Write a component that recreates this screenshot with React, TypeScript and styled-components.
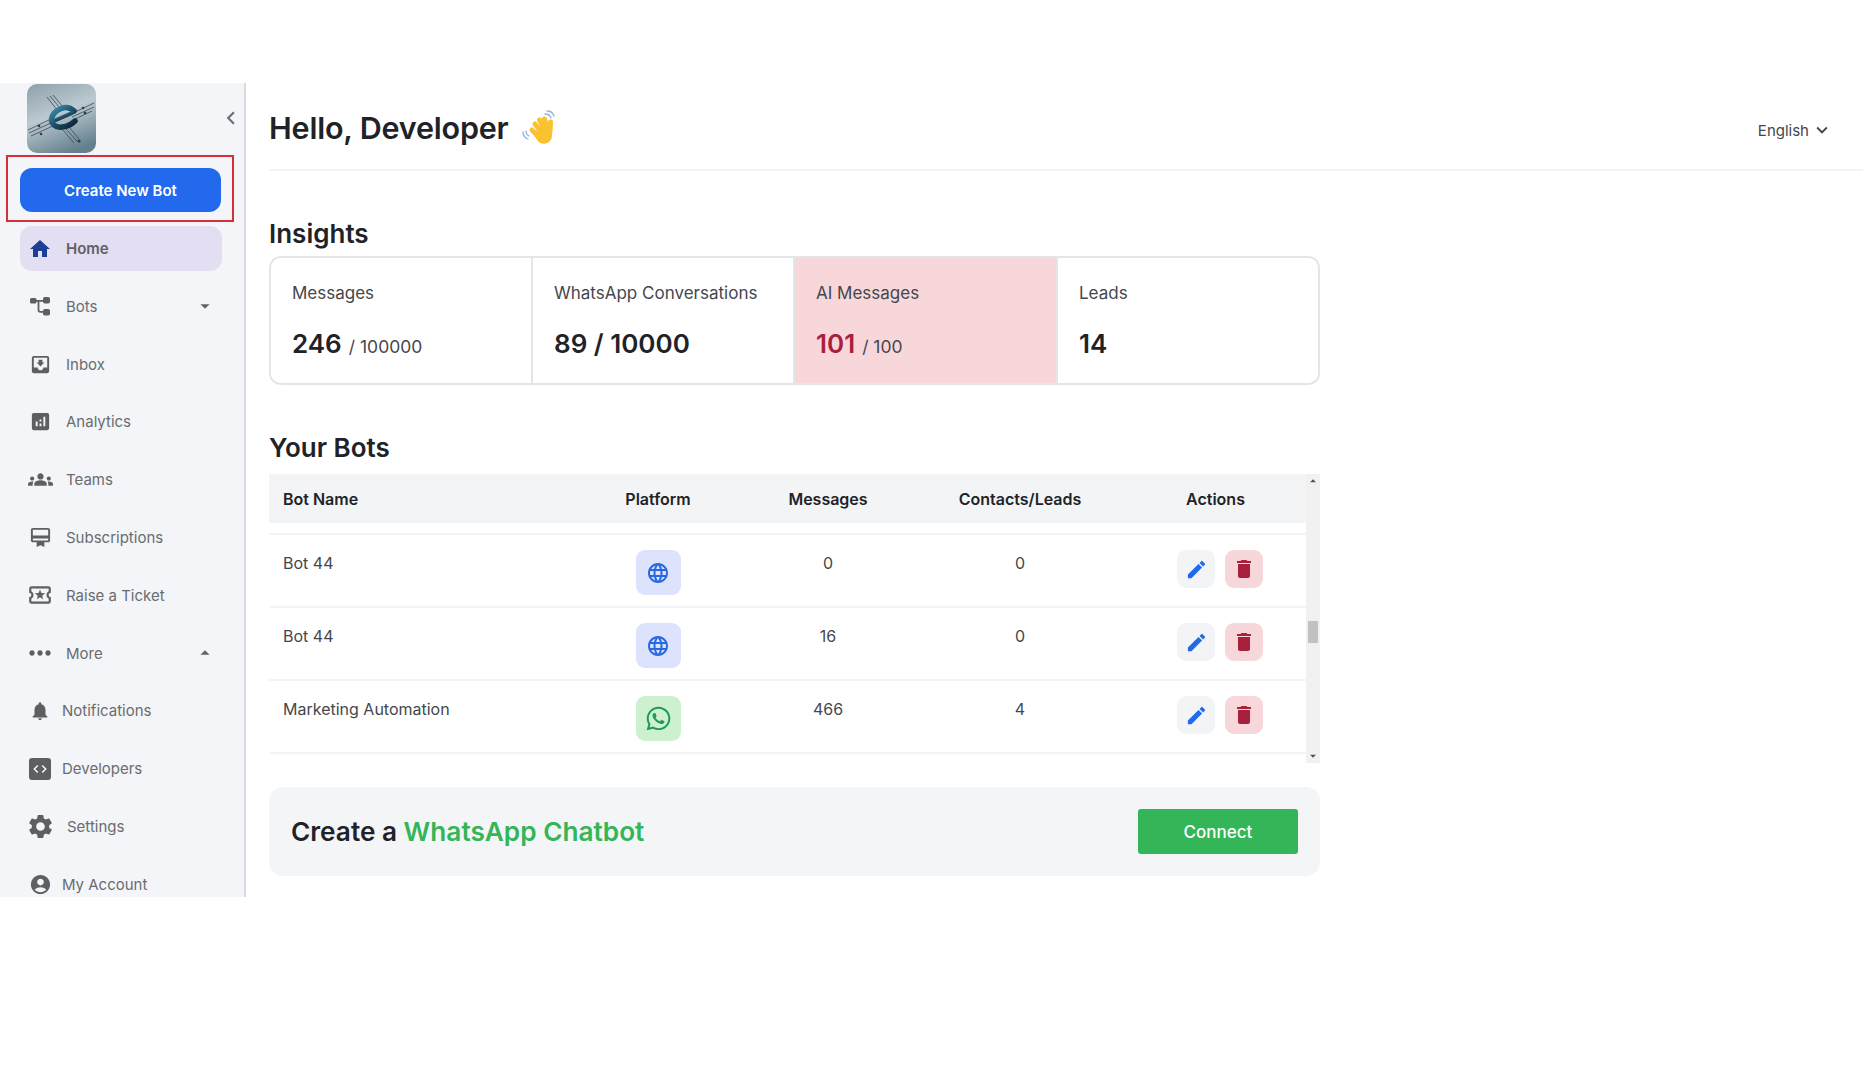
import React from "react";
import styled, { createGlobalStyle } from "styled-components";
import {
  MdHome,
  MdMoveToInbox,
  MdAnalytics,
  MdGroups,
  MdCardMembership,
  MdOutlineLocalActivity,
  MdMoreHoriz,
  MdNotifications,
  MdSettings,
  MdAccountCircle,
  MdCode,
  MdEdit,
  MdDelete,
  MdLanguage,
  MdChevronLeft,
  MdKeyboardArrowDown,
  MdArrowDropDown,
  MdArrowDropUp,
} from "react-icons/md";
import { FaWhatsapp } from "react-icons/fa";

const GlobalStyle = createGlobalStyle`
  html, body {
    margin: 0;
    padding: 0;
    background: #fff;
    font-family: "Inter", "Liberation Sans", sans-serif;
    color: #1f2328;
  }
  * { box-sizing: border-box; }
`;

const Page = styled.div`
  padding-top: 83px;
  height: 1080px;
  overflow: hidden;
`;

const Shell = styled.div`
  display: flex;
  height: 814px;
`;

const Sidebar = styled.aside`
  width: 246px;
  flex-shrink: 0;
  background: #f3f5f8;
  border-right: 2px solid #d8dbe0;
  overflow: hidden;
`;

const LogoRow = styled.div`
  display: flex;
  align-items: center;
  justify-content: space-between;
  height: 70px;
  padding: 0 0 0 27px;
  color: #6b6f75;
`;

const CreateFrame = styled.div`
  width: 228px;
  height: 67px;
  margin: 2px 0 0 6px;
  padding: 11px 12px;
  border: 2px solid #d5303a;
`;

const CreateButton = styled.button`
  display: block;
  width: 201px;
  height: 44px;
  border: none;
  border-radius: 12px;
  background: #2369ee;
  color: #fff;
  font: 600 15px "Inter", sans-serif;
`;

const NavList = styled.nav`
  display: flex;
  flex-direction: column;
  gap: 12.8px;
  margin: 4px 0 0 20px;
  width: 202px;
`;

const NavRow = styled.div<{ $active?: boolean }>`
  display: flex;
  align-items: center;
  flex-shrink: 0;
  height: 45px;
  padding: 0 6px 0 9px;
  border-radius: 12px;
  background: ${(p) => (p.$active ? "#e4def3" : "transparent")};
  color: ${(p) => (p.$active ? "#5f6068" : "#6a6c70")};
  font-size: 15px;
  font-weight: ${(p) => (p.$active ? 600 : 400)};
`;

const NavIcon = styled.span<{ $active?: boolean }>`
  display: flex;
  align-items: center;
  justify-content: center;
  flex-shrink: 0;
  width: 22px;
  color: ${(p) => (p.$active ? "#1c3f94" : "#5d5f63")};
  svg {
    flex-shrink: 0;
  }
`;

const NavLabel = styled.span<{ $indent: number }>`
  flex: 1;
  margin-left: ${(p) => p.$indent}px;
`;

const Caret = styled.span`
  display: flex;
  color: #63656a;
`;

const DevBox = styled.span`
  display: flex;
  align-items: center;
  justify-content: center;
  width: 22px;
  height: 22px;
  border-radius: 3px;
  background: #5d5f63;
  color: #fff;
`;

const Main = styled.main`
  flex: 1;
  min-width: 0;
  padding: 0 3px 0 23px;
`;

const Header = styled.header`
  display: flex;
  align-items: center;
  justify-content: space-between;
  height: 88px;
  padding: 3px 30px 0 0;
  border-bottom: 2px solid #f3f4f6;
`;

const Title = styled.h1`
  display: flex;
  align-items: center;
  gap: 12px;
  margin: 0;
  font-size: 30.5px;
  font-weight: 600;
  letter-spacing: -0.2px;
`;

const Language = styled.div`
  display: flex;
  align-items: center;
  gap: 2px;
  padding-top: 5px;
  color: #44474c;
  font-size: 15px;
`;

const Content = styled.div`
  width: 1051px;
`;

const SectionTitle = styled.h2`
  margin: 47px 0 6px;
  font-size: 26px;
  line-height: 32px;
  font-weight: 600;
`;

const Cards = styled.section`
  display: grid;
  grid-template-columns: 260px 262px 263px 1fr;
  height: 129px;
  border: 2px solid #e3e5e8;
  border-radius: 12px;
  overflow: hidden;
`;

const Card = styled.div<{ $alert?: boolean }>`
  padding: 24px 0 0 21px;
  background: ${(p) => (p.$alert ? "#f8d7da" : "#fff")};
  & + & {
    border-left: 2px solid #e3e5e8;
  }
`;

const CardLabel = styled.div`
  color: #44474c;
  font-size: 17px;
  line-height: 22px;
`;

const CardValue = styled.div<{ $alert?: boolean }>`
  margin-top: 23px;
  color: ${(p) => (p.$alert ? "#a8213c" : "#1f2328")};
  font-size: 26px;
  line-height: 34px;
  font-weight: 600;
`;

const CardLimit = styled.span`
  margin-left: 7px;
  color: #44474c;
  font-size: 17.5px;
  font-weight: 400;
`;

const TableWrap = styled.section`
  display: flex;
  height: 289px;
  margin-top: 10px;
`;

const TableInner = styled.div`
  flex: 1;
  min-width: 0;
`;

const columns = "300px 178px 162px 222px 169px";

const TableHead = styled.div`
  display: grid;
  grid-template-columns: ${columns};
  align-items: center;
  height: 49px;
  background: #f2f4f6;
  font-size: 16px;
  font-weight: 600;
`;

const HeadName = styled.div`
  padding-left: 14px;
`;

const HeadCell = styled.div`
  text-align: center;
`;

const TableGap = styled.div`
  height: 12px;
  border-bottom: 2px solid #f3f4f6;
`;

const TableRow = styled.div`
  display: grid;
  grid-template-columns: ${columns};
  height: 73px;
  border-bottom: 2px solid #f3f4f6;
  color: #44474c;
  font-size: 16px;
`;

const NameCell = styled.div`
  padding: 17px 0 0 14px;
  line-height: 22px;
`;

const NumCell = styled.div`
  padding-top: 17px;
  line-height: 22px;
  text-align: center;
`;

const PlatformCell = styled.div`
  display: flex;
  justify-content: center;
  padding-top: 15px;
`;

const PlatformBadge = styled.span<{ $kind: "web" | "whatsapp" }>`
  display: flex;
  align-items: center;
  justify-content: center;
  width: 45px;
  height: 45px;
  border-radius: 9px;
  background: ${(p) => (p.$kind === "web" ? "#dde3fc" : "#cdf0cf")};
  color: ${(p) => (p.$kind === "web" ? "#2968e0" : "#1f9a55")};
`;

const ActionsCell = styled.div`
  display: flex;
  justify-content: center;
  gap: 10px;
  padding: 15px 0 0 9px;
`;

const ActionButton = styled.span<{ $danger?: boolean }>`
  display: flex;
  align-items: center;
  justify-content: center;
  width: 38px;
  height: 38px;
  border-radius: 9px;
  background: ${(p) => (p.$danger ? "#f8d7da" : "#f2f4f6")};
  color: ${(p) => (p.$danger ? "#a8213c" : "#2369ee")};
`;

const Scrollbar = styled.div`
  display: flex;
  flex-direction: column;
  align-items: center;
  justify-content: space-between;
  width: 14px;
  background: #f1f1f1;
  color: #505050;
`;

const ScrollThumb = styled.div`
  width: 10px;
  height: 22px;
  margin-top: 133px;
  margin-bottom: auto;
  background: #c1c1c1;
`;

const Banner = styled.section`
  display: flex;
  align-items: center;
  justify-content: space-between;
  height: 89px;
  margin-top: 24px;
  padding: 0 22px;
  border-radius: 14px;
  background: #f3f5f7;
`;

const BannerText = styled.div`
  font-size: 26.2px;
  font-weight: 600;
`;

const Accent = styled.span`
  color: #34b558;
`;

const ConnectButton = styled.button`
  width: 160px;
  height: 45px;
  border: none;
  border-radius: 3px;
  background: #34b558;
  color: #fff;
  font: 500 17px "Inter", sans-serif;
`;

const BotsIcon = () => (
  <svg width="22" height="22" viewBox="0 0 22 22" fill="#5d5f63">
    <rect x="1" y="3" width="6.5" height="5.5" rx="1.6" />
    <rect x="14" y="2" width="7" height="6.5" rx="1.8" />
    <rect x="14" y="14" width="7" height="6.5" rx="1.8" />
    <path d="M7 5h8v1.8h-4.6v8.2c0 .6.3.9.9.9H15v1.8h-3.7c-1.6 0-2.7-1-2.7-2.7V6.8H7z" />
  </svg>
);

const Logo = () => (
  <svg width="69" height="69" viewBox="0 0 69 69">
    <defs>
      <linearGradient id="logoBg" x1="0.2" y1="0" x2="0.6" y2="1">
        <stop offset="0" stopColor="#93a6b0" />
        <stop offset="0.45" stopColor="#bcc9d0" />
        <stop offset="1" stopColor="#64808e" />
      </linearGradient>
      <linearGradient id="logoE" x1="0" y1="0" x2="1" y2="1">
        <stop offset="0" stopColor="#3f93b5" />
        <stop offset="0.6" stopColor="#16435a" />
        <stop offset="1" stopColor="#0c2230" />
      </linearGradient>
    </defs>
    <rect width="69" height="69" rx="10" fill="url(#logoBg)" />
    <g stroke="#2b3a42" strokeWidth="0.7" fill="none">
      <path d="M20 13L30 26M23 12L33 24M26 11L36 23" />
      <path d="M36 46L47 59M39 45L50 57M42 43L52 55" />
      <path d="M1 46L24 35M2 49L26 38M4 52L28 41" />
      <path d="M44 30L67 19M45 33L67 23M46 36L65 27" />
    </g>
    <g fill="#22404f">
      <circle cx="12" cy="42" r="1.3" />
      <circle cx="14" cy="50" r="1.3" />
      <circle cx="56" cy="24" r="1.3" />
      <circle cx="58" cy="29" r="1.3" />
      <circle cx="52" cy="57" r="1.6" />
    </g>
    <g fill="none" stroke="url(#logoE)" strokeLinecap="round">
      <path d="M47 27C40 20 28 25 25 33c-2 6 3 11 10 10 5-.5 10-3 13-6" strokeWidth="5.5" />
      <path d="M29 36L45 29" strokeWidth="4" />
    </g>
  </svg>
);

const WavingHand = () => (
  <svg width="36" height="36" viewBox="0 0 36 36">
    <g fill="none" stroke="#f9c22e" strokeLinecap="round" strokeWidth="5">
      <path d="M14 14L21 23" />
      <path d="M18.5 10L24 21" />
      <path d="M23.5 9L27 20" />
      <path d="M29.5 12L29 22" />
      <path d="M11 20L18 27" />
    </g>
    <path
      d="M15 21c3-4 12-5 15-1 2 5 1 10-2 12-4 3-9 2-11-1l-5-7c2 0 2-1 3-3z"
      fill="#f9c22e"
    />
    <g fill="none" stroke="#8fb4e3" strokeWidth="1.3" strokeLinecap="round">
      <path d="M24 4c3 0 5 1 6 4M26 1c3 0 6 2 7 5" />
      <path d="M2 22c0 3 2 6 5 7M5 21c0 2 1 4 3 5" />
    </g>
  </svg>
);

const navItems = [
  { label: "Home", icon: <MdHome size={24} />, active: true, indent: 15 },
  { label: "Bots", icon: <BotsIcon />, indent: 15, caret: "down" },
  { label: "Inbox", icon: <MdMoveToInbox size={23} />, indent: 15 },
  { label: "Analytics", icon: <MdAnalytics size={23} />, indent: 15 },
  { label: "Teams", icon: <MdGroups size={25} />, indent: 15 },
  { label: "Subscriptions", icon: <MdCardMembership size={23} />, indent: 15 },
  { label: "Raise a Ticket", icon: <MdOutlineLocalActivity size={26} />, indent: 15 },
  { label: "More", icon: <MdMoreHoriz size={32} />, indent: 15, caret: "up" },
  { label: "Notifications", icon: <MdNotifications size={22} />, indent: 11 },
  {
    label: "Developers",
    icon: (
      <DevBox>
        <MdCode size={16} />
      </DevBox>
    ),
    indent: 11,
  },
  { label: "Settings", icon: <MdSettings size={29} />, indent: 16 },
  { label: "My Account", icon: <MdAccountCircle size={23} />, indent: 11 },
];

const insights = [
  { label: "Messages", value: "246", limit: "/ 100000" },
  { label: "WhatsApp Conversations", value: "89 / 10000" },
  { label: "AI Messages", value: "101", limit: "/ 100", alert: true },
  { label: "Leads", value: "14" },
];

const bots = [
  { name: "Bot 44", kind: "web" as const, messages: 0, contacts: 0 },
  { name: "Bot 44", kind: "web" as const, messages: 16, contacts: 0 },
  { name: "Marketing Automation", kind: "whatsapp" as const, messages: 466, contacts: 4 },
];

export default function App() {
  return (
    <>
      <GlobalStyle />
      <Page>
        <Shell>
          <Sidebar>
            <LogoRow>
              <Logo />
              <MdChevronLeft size={26} />
            </LogoRow>
            <CreateFrame>
              <CreateButton>Create New Bot</CreateButton>
            </CreateFrame>
            <NavList>
              {navItems.map((item) => (
                <NavRow key={item.label} $active={item.active}>
                  <NavIcon $active={item.active}>{item.icon}</NavIcon>
                  <NavLabel $indent={item.indent}>{item.label}</NavLabel>
                  {item.caret && (
                    <Caret>
                      {item.caret === "down" ? (
                        <MdArrowDropDown size={22} />
                      ) : (
                        <MdArrowDropUp size={22} />
                      )}
                    </Caret>
                  )}
                </NavRow>
              ))}
            </NavList>
          </Sidebar>

          <Main>
            <Header>
              <Title>
                Hello, Developer <WavingHand />
              </Title>
              <Language>
                English <MdKeyboardArrowDown size={22} />
              </Language>
            </Header>

            <Content>
              <SectionTitle>Insights</SectionTitle>
              <Cards>
                {insights.map((card) => (
                  <Card key={card.label} $alert={card.alert}>
                    <CardLabel>{card.label}</CardLabel>
                    <CardValue $alert={card.alert}>
                      {card.value}
                      {card.limit && <CardLimit>{card.limit}</CardLimit>}
                    </CardValue>
                  </Card>
                ))}
              </Cards>

              <SectionTitle>Your Bots</SectionTitle>
              <TableWrap>
                <TableInner>
                  <TableHead>
                    <HeadName>Bot Name</HeadName>
                    <HeadCell>Platform</HeadCell>
                    <HeadCell>Messages</HeadCell>
                    <HeadCell>Contacts/Leads</HeadCell>
                    <HeadCell>Actions</HeadCell>
                  </TableHead>
                  <TableGap />
                  {bots.map((bot, i) => (
                    <TableRow key={i}>
                      <NameCell>{bot.name}</NameCell>
                      <PlatformCell>
                        <PlatformBadge $kind={bot.kind}>
                          {bot.kind === "web" ? (
                            <MdLanguage size={24} />
                          ) : (
                            <FaWhatsapp size={27} />
                          )}
                        </PlatformBadge>
                      </PlatformCell>
                      <NumCell>{bot.messages}</NumCell>
                      <NumCell>{bot.contacts}</NumCell>
                      <ActionsCell>
                        <ActionButton>
                          <MdEdit size={23} />
                        </ActionButton>
                        <ActionButton $danger>
                          <MdDelete size={24} />
                        </ActionButton>
                      </ActionsCell>
                    </TableRow>
                  ))}
                </TableInner>
                <Scrollbar>
                  <MdArrowDropUp size={14} />
                  <ScrollThumb />
                  <MdArrowDropDown size={14} />
                </Scrollbar>
              </TableWrap>

              <Banner>
                <BannerText>
                  Create a <Accent>WhatsApp Chatbot</Accent>
                </BannerText>
                <ConnectButton>Connect</ConnectButton>
              </Banner>
            </Content>
          </Main>
        </Shell>
      </Page>
    </>
  );
}
